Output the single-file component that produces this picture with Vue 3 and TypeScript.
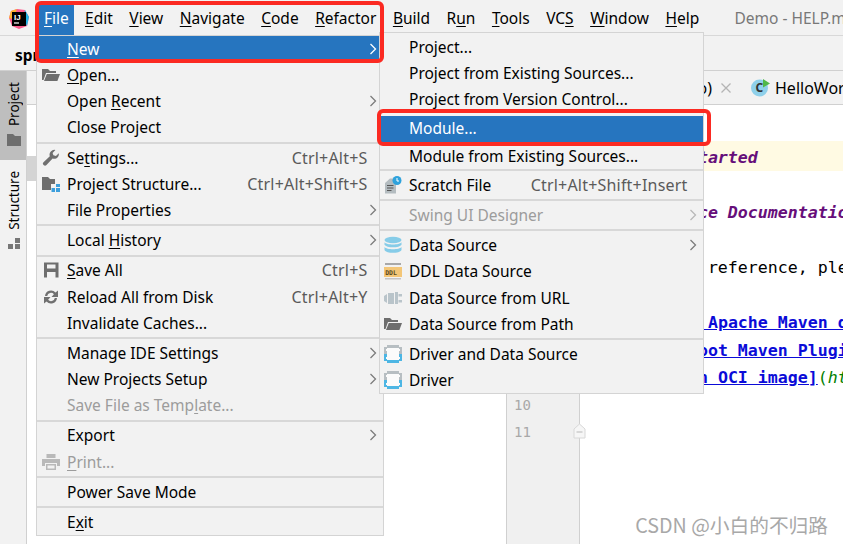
<script setup lang="ts">
interface Row {
  sep?: boolean
  label?: string
  key?: string
  icon?: string
  sub?: boolean
  off?: boolean
  on?: boolean
  cls?: string
}
interface Seg { t: string; c?: string }

function parts(label: string): [string, string, string] {
  const i = label.indexOf('_')
  if (i < 0) return [label, '', '']
  return [label.slice(0, i), label.charAt(i + 1), label.slice(i + 2)]
}

const topMenus = ['_File', '_Edit', '_View', '_Navigate', '_Code', '_Refactor', '_Build', 'R_un', '_Tools', 'VC_S', '_Window', '_Help']

const menus: { cls: string; rows: Row[] }[] = [
  {
    cls: 'm-file',
    rows: [
      { label: '_New', sub: true, on: true },
      { label: '_Open...', icon: 'open' },
      { label: 'Open _Recent', sub: true },
      { label: 'Close Project' },
      { sep: true },
      { label: 'Se_ttings...', key: 'Ctrl+Alt+S', icon: 'wrench' },
      { label: 'Project Structure...', key: 'Ctrl+Alt+Shift+S', icon: 'structure' },
      { label: 'File Properties', sub: true },
      { sep: true },
      { label: 'Local _History', sub: true },
      { sep: true },
      { label: '_Save All', key: 'Ctrl+S', icon: 'save' },
      { label: 'Reload All from Disk', key: 'Ctrl+Alt+Y', icon: 'reload' },
      { label: 'Invalidate Caches...' },
      { sep: true },
      { label: 'Manage IDE Settings', sub: true },
      { label: 'New Projects Setup', sub: true },
      { label: 'Save File as Temp_late...', off: true },
      { sep: true },
      { label: 'Export', sub: true },
      { label: '_Print...', icon: 'print', off: true },
      { sep: true },
      { label: 'Power Save Mode' },
      { sep: true },
      { label: 'E_xit' },
    ],
  },
  {
    cls: 'm-new',
    rows: [
      { label: 'Project...' },
      { label: 'Project from Existing Sources...' },
      { label: 'Project from Version Control...' },
      { label: 'Module...', on: true, cls: 'module' },
      { label: 'Module from Existing Sources...' },
      { sep: true, cls: 'thin' },
      { label: 'Scratch File', key: 'Ctrl+Alt+Shift+Insert', icon: 'scratch' },
      { sep: true },
      { label: 'Swing UI Designer', sub: true, off: true },
      { sep: true },
      { label: 'Data Source', sub: true, icon: 'db' },
      { label: 'DDL Data Source', icon: 'ddl' },
      { label: 'Data Source from URL', icon: 'plug' },
      { label: 'Data Source from Path', icon: 'open' },
      { sep: true },
      { label: 'Driver and Data Source', icon: 'driver' },
      { label: 'Driver', icon: 'driver' },
    ],
  },
]

const code: Seg[][] = [
  [{ t: '# Getting Started', c: 'head' }],
  [],
  [{ t: '### Reference Documentation', c: 'head' }],
  [],
  [{ t: 'For further reference, please consider the following sections:' }],
  [],
  [{ t: '* [' }, { t: 'Official Apache Maven documentation]', c: 'link' }],
  [{ t: '* [' }, { t: 'Spring Boot Maven Plugin Reference Guide]', c: 'link' }],
  [{ t: '* [' }, { t: 'Create an OCI image]', c: 'link' }, { t: '(', c: 'paren' }, { t: 'https://docs.spring.io', c: 'url' }],
  [],
  [],
]
</script>

<template>
  <div class="ide">
    <header class="menubar">
      <div class="logo">
        <svg width="20" height="20" viewBox="0 0 20 20">
          <path d="M2 2 L8 0 L16 1 L20 8 L18 17 L10 20 L3 17 L0 9 Z" fill="#fc5a8c" />
          <path d="M2 2 L8 0 L4 10 L0 9 Z" fill="#fcb32c" />
          <path d="M16 1 L20 8 L18 17 L14 10 Z" fill="#1fb6e8" />
          <rect x="3" y="3" width="14" height="14" fill="#000" />
          <text x="5" y="11" class="logo-text">IJ</text>
          <rect x="5" y="13.4" width="5" height="1.2" fill="#fff" />
        </svg>
      </div>
      <span v-for="(m, i) in topMenus" :key="m" class="top" :class="{ active: i === 0 }">{{ parts(m)[0] }}<u>{{ parts(m)[1] }}</u>{{ parts(m)[2] }}</span>
      <span class="title">Demo - HELP.md</span>
    </header>

    <div class="navbar"><b>spring-boot-demo</b></div>

    <div class="body">
      <aside class="strip">
        <div class="tool tool-on">
          <span class="vert">Project</span>
          <svg width="16" height="14" viewBox="0 0 16 14"><path d="M1 1h6l2 2h6v10H1z" fill="#6e6e6e" /></svg>
        </div>
        <div class="tool">
          <span class="vert">Structure</span>
          <svg width="14" height="12" viewBox="0 0 14 12" class="struct"><path d="M8 0h5v5H8zM1 6h5v5H1zM8 6h5v5H8z" fill="#777" /></svg>
        </div>
      </aside>

      <section class="project">
        <div class="project-head"></div>
        <div class="selected"></div>
      </section>

      <section class="main">
        <div class="tabs">
          <span class="tab">HELP.md (demo)</span>
          <svg class="close" width="10" height="10" viewBox="0 0 10 10"><path d="M.5.5l9 9M9.5.5l-9 9" stroke="#b4b4b4" stroke-width="1.3" /></svg>
          <svg class="cicon" width="19" height="19" viewBox="0 0 19 19">
            <circle cx="8.5" cy="10" r="8.5" fill="#8fd0ea" />
            <text x="4.6" y="14" class="c-text">C</text>
            <path d="M12 1l7 4.5-7 4z" fill="#50b848" />
          </svg>
          <span class="tab2">HelloWorld.java</span>
        </div>
        <div class="editor">
          <div class="gutter">
            <div v-for="(l, i) in code" :key="i" class="num" :class="{ first: i === 0 }">
              {{ i + 1 }}
              <svg v-if="i === 10" class="fold" width="13" height="16" viewBox="0 0 13 16">
                <path d="M1 15V6l5.500-5L12 6v9z" fill="#f6f6f6" stroke="#d8d8d8" />
                <path d="M3.500 9h6" stroke="#b8b8b8" />
              </svg>
            </div>
          </div>
          <div class="code">
            <div v-for="(l, i) in code" :key="i" class="line" :class="{ first: i === 0 }"><span v-for="(s, j) in l" :key="j" :class="s.c">{{ s.t }}</span></div>
          </div>
        </div>
      </section>
    </div>

    <nav v-for="menu in menus" :key="menu.cls" class="menu" :class="menu.cls">
      <template v-for="(r, i) in menu.rows" :key="i">
        <div v-if="r.sep" class="sep" :class="r.cls"></div>
        <div v-else class="row" :class="[r.cls, { on: r.on, off: r.off }]">
          <span class="slot">
            <svg v-if="r.icon" width="18" height="18" viewBox="0 0 18 18">
              <template v-if="r.icon === 'open'">
                <path d="M0 3h6l2 2h6v2H4L1.500 14H0z" fill="#6e6e6e" />
                <path d="M4.800 8H18l-2.600 7H2z" fill="#6e6e6e" />
              </template>
              <path v-else-if="r.icon === 'wrench'" d="M16.800 4.200a4.800 4.800 0 0 1-6.200 5.400L4.500 16a2 2 0 0 1-3-2.800l6.300-6A4.800 4.800 0 0 1 13.400 1L10.600 3.900l.8 2.400 2.500.7z" fill="#707070" />
              <template v-else-if="r.icon === 'structure'">
                <path d="M0 2h6l2 2h5v5H9v6H0z" fill="#6e6e6e" />
                <path d="M14 9h4v3h-4zM9.500 13h3.500v4H9.500zM14 13h4v4h-4z" fill="#3d9fdc" />
              </template>
              <path v-else-if="r.icon === 'save'" fill-rule="evenodd" d="M2 1.500h14.500v15H2zM5 3.500v4h8.500v-4zM5 11v5.500h8.500V11z" fill="#6e6e6e" />
              <template v-else-if="r.icon === 'reload'">
                <path d="M3 8a6 6 0 0 1 10.500-3.500L16 2.500V9H9.500l2.400-2.700A3.800 3.800 0 0 0 5.200 8z" fill="#707070" />
                <path d="M15 10a6 6 0 0 1-10.500 3.500L2 15.500V9h6.500l-2.400 2.700a3.800 3.800 0 0 0 6.700-1.700z" fill="#707070" />
              </template>
              <template v-else-if="r.icon === 'print'">
                <path d="M4.500 1h9v4h-9z" fill="#b9b9b9" />
                <path d="M0 6h18v7h-3v-3H3v3H0z" fill="#b9b9b9" />
                <path d="M4 11h10v6H4zM5.500 12.500v3h7v-3z" fill="#b9b9b9" fill-rule="evenodd" />
              </template>
              <template v-else-if="r.icon === 'scratch'">
                <path d="M6 2.500h6v15H1V7z" fill="#b4bcc0" />
                <path d="M3 9.500h6.500M3 12h6.500M3 14.500h4.500" stroke="#555" stroke-width="1.200" />
                <circle cx="13" cy="4.500" r="4.500" fill="#2ea2dc" />
                <path d="M13 2v3h2" stroke="#fff" fill="none" />
              </template>
              <template v-else-if="r.icon === 'db'">
                <ellipse cx="9" cy="4" rx="8.500" ry="3.200" fill="#86cce8" />
                <path d="M.5 6.200c2 3 15 3 17 0v2.600c-2 3.400-15 3.400-17 0z" fill="#86cce8" />
                <path d="M.5 11c2 3 15 3 17 0v3c-2 3.800-15 3.800-17 0z" fill="#86cce8" />
              </template>
              <template v-else-if="r.icon === 'ddl'">
                <rect x="1" y="1" width="16" height="2" fill="#a8a8a8" />
                <rect x="0" y="5" width="18" height="10" fill="#f3c677" />
                <text x="1.200" y="13" class="ddl-text">DDL</text>
                <rect x="1" y="16" width="16" height="1.500" fill="#c4c4c4" />
              </template>
              <path v-else-if="r.icon === 'plug'" d="M0 7l3-2v9L0 12zM4 4h6v11H4zM11 3h3v12h-3zM14.500 5H18v2.500h-3.500zM14.500 11H18v2.500h-3.500z" fill="#b9c4ca" />
              <template v-else-if="r.icon === 'driver'">
                <rect x="2" y="2" width="14" height="14" fill="#fbfbfb" />
                <path d="M3 0h12v3H3zM0 2h3v2H2v2h1v3H0zM15 2h3v7h-3V6h1V4h-1z" fill="#b7bec2" />
                <path d="M0 9h3v3H2v2h1v1h12v-1h1v-2h-1V9h3v7h-3v2H3v-2H0z" fill="#4db6e4" />
              </template>
            </svg>
          </span>
          <span class="label">{{ parts(r.label || '')[0] }}<u>{{ parts(r.label || '')[1] }}</u>{{ parts(r.label || '')[2] }}</span>
          <span v-if="r.key" class="key">{{ r.key }}</span>
          <svg v-if="r.sub" class="arrow" width="8" height="12" viewBox="0 0 8 12"><path d="M1.500 1l5 5-5 5" fill="none" stroke="currentColor" stroke-width="1.300" /></svg>
        </div>
      </template>
    </nav>

    <div class="mark mark-a"></div>
    <div class="mark mark-b"></div>
    <div class="watermark">CSDN @小白的不归路</div>
  </div>
</template>

<style scoped>
.ide {
  position: relative;
  width: 843px;
  height: 544px;
  overflow: hidden;
  background: #fff;
  font-family: "Noto Sans", "Liberation Sans", sans-serif;
  font-size: 15.500px;
  color: #000;
  display: flex;
  flex-direction: column;
}
u { text-decoration-thickness: 1px; text-underline-offset: 2px; }

.menubar {
  height: 36px;
  box-sizing: border-box;
  display: flex;
  align-items: flex-end;
  background: #f2f2f2;
  border-bottom: 1px solid #d8d8d8;
  flex: none;
}
.logo { width: 38px; height: 35px; padding: 9px 0 0 9px; box-sizing: border-box; flex: none; }
.logo-text { font: bold 8px "Liberation Sans", sans-serif; fill: #fff; }
.top {
  height: 30px;
  line-height: 26px;
  padding: 0 8.250px;
  white-space: nowrap;
  flex: none;
}
.top.active { background: #2675bf; color: #fff; padding: 0 5px 0 6px; margin-right: 3px; }
.title { margin-left: 27px; height: 30px; line-height: 26px; color: #787878; white-space: nowrap; }

.navbar {
  height: 35px;
  box-sizing: border-box;
  flex: none;
  background: #f2f2f2;
  border-bottom: 1px solid #d0d0d0;
  padding-left: 15px;
  line-height: 38px;
  white-space: nowrap;
}

.body { flex: 1; display: flex; min-height: 0; }
.strip {
  width: 27px;
  box-sizing: border-box;
  flex: none;
  background: #f2f2f2;
  border-right: 1px solid #d0d0d0;
  display: flex;
  flex-direction: column;
}
.tool {
  width: 28px;
  display: flex;
  flex-direction: column;
  align-items: center;
  gap: 7px;
  padding-top: 11px;
  font-size: 13.500px;
}
.tool-on { width: 26px; background: #bebebe; height: 89px; box-sizing: border-box; padding-left: 2px; }
.vert { writing-mode: vertical-rl; transform: rotate(180deg); line-height: 16px; }
.struct { margin-top: 1px; }

.project { width: 480px; flex: none; box-sizing: border-box; border-right: 1px solid #d0d0d0; background: #fff; }
.project-head { height: 34px; background: #f2f2f2; border-bottom: 1px solid #d0d0d0; box-sizing: border-box; }
.selected { height: 25px; margin-top: 51px; background: #d4d4d4; }

.main { flex: 1; min-width: 0; display: flex; flex-direction: column; }
.tabs {
  height: 34px;
  box-sizing: border-box;
  flex: none;
  display: flex;
  align-items: center;
  background: #f2f2f2;
  border-bottom: 1px solid #d0d0d0;
  white-space: nowrap;
  overflow: hidden;
  font-size: 16px;
}
.tab { width: 205px; text-align: right; flex: none; }
.close { margin-left: 9px; flex: none; }
.cicon { margin-left: 20px; flex: none; }
.c-text { font: bold 12px "Noto Sans", sans-serif; fill: #333; }
.tab2 { margin-left: 5px; }

.editor { flex: 1; display: flex; min-height: 0; padding-top: 36px; }
.gutter {
  width: 73px;
  box-sizing: border-box;
  flex: none;
  margin-top: -36px;
  padding-top: 36px;
  background: #f0f0f0;
  border-right: 1px solid #d0d0d0;
}
.num {
  position: relative;
  height: 27.500px;
  padding-left: 7px;
  font: 14px/28px "DejaVu Sans Mono", monospace;
  color: #a8a8a8;
}
.num.first, .line.first { height: 29.500px; padding-top: 2px; box-sizing: border-box; }
.fold { position: absolute; right: -7px; top: 5px; }

.code { flex: 1; min-width: 0; overflow: hidden; font: 16.600px/29.500px "DejaVu Sans Mono", monospace; }
.line { height: 27.500px; padding-left: 8px; white-space: pre; }
.line.first { background: #fffae3; }
.head { color: #660e7a; font-weight: bold; font-style: italic; }
.link { color: #0b0bd8; font-weight: bold; text-decoration: underline; }
.paren { color: #008000; }
.url { color: #008000; font-style: italic; }

.menu {
  position: absolute;
  box-sizing: border-box;
  background: #f2f2f2;
  border: 1px solid #d4d4d4;
}
.m-file { left: 36px; top: 35px; width: 348px; height: 501px; }
.m-new { left: 379px; top: 32px; width: 325px; height: 362px; padding-top: 1px; }
.row {
  display: flex;
  align-items: center;
  box-sizing: border-box;
  height: 26.200px;
  padding: 0 15.500px 0.500px 5px;
  white-space: nowrap;
}
.m-new .row { padding-left: 4px; }
.module { margin: 3px 0 1px; }
.slot { width: 18px; height: 18px; margin-right: 7px; flex: none; display: flex; }
.label { flex: 1; }
.key { color: #5a5a5a; font-size: 16px; letter-spacing: 0.200px; }
.arrow { margin-right: -9px; color: #7c7c7c; flex: none; }
.row.on { background: #2675bf; color: #fff; }
.row.on .arrow { color: #fff; }
.row.off { color: #9c9c9c; }
.row.off .arrow { color: #b8b8b8; }
.sep { height: 4px; display: flex; align-items: center; }
.sep.thin { height: 3px; }
.sep::after { content: ""; display: block; width: 100%; height: 2px; background: #d8d8d8; }

.ddl-text { font: bold 6.500px "DejaVu Sans Mono", monospace; fill: #5a4a20; }

.mark {
  position: absolute;
  box-sizing: border-box;
  border: 4px solid #fb2a22;
  border-radius: 6px;
  pointer-events: none;
}
.mark-a { left: 35px; top: 1px; width: 349px; height: 62px; }
.mark-b { left: 377px; top: 109px; width: 334px; height: 37px; }

.watermark {
  position: absolute;
  right: 15px;
  bottom: 5px;
  font: 19.700px "Noto Sans CJK SC", "Noto Sans", sans-serif;
  color: #a8a8a8;
  white-space: nowrap;
}
</style>
